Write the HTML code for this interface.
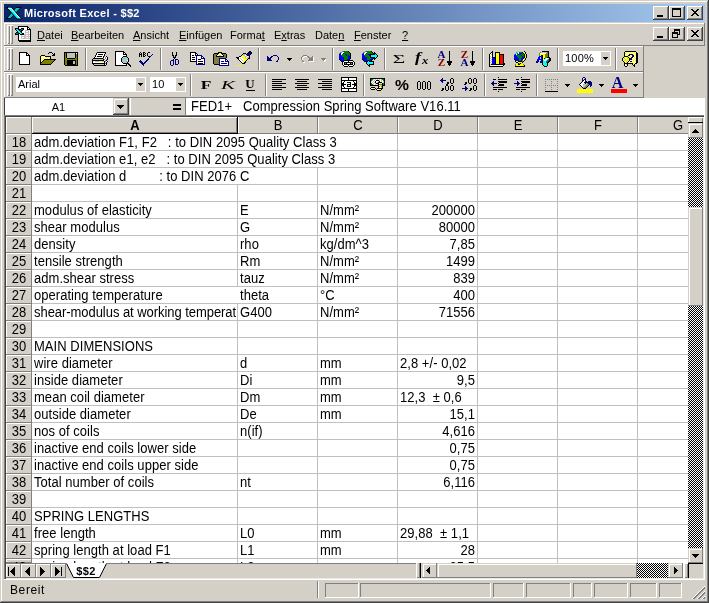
<!DOCTYPE html><html><head><meta charset="utf-8"><title>Microsoft Excel - $$2</title><style>
html,body{margin:0;padding:0;}
body{width:709px;height:603px;background:#d4d0c8;position:relative;overflow:hidden;font-family:"Liberation Sans",sans-serif;font-size:11px;color:#000;}
div,span,svg{position:absolute;box-sizing:border-box;}
svg{shape-rendering:crispEdges;overflow:visible}
.cap{background:#d4d0c8;box-shadow:inset -1px -1px #404040,inset 1px 1px #fff,inset -2px -2px #808080,inset 2px 2px #d4d0c8;}
.sb{background:#d4d0c8;box-shadow:inset -1px -1px #404040,inset 1px 1px #d4d0c8,inset -2px -2px #808080,inset 2px 2px #fff;}
.sb15{background:#d4d0c8;box-shadow:inset -1px -1px #808080,inset 1px 1px #d4d0c8,inset 2px 2px #fff;}
.r1{box-shadow:inset -1px -1px #808080,inset 1px 1px #fff;}
.s1{box-shadow:inset -1px -1px #fff,inset 1px 1px #808080;}
.chk{background:repeating-conic-gradient(#000 0% 25%,#fff 0% 50%) 0 0/2px 2px;}
.m{top:28px;height:14px;line-height:14px;font-size:11px;white-space:pre;}
.m u{text-decoration:underline;text-underline-offset:1px;text-decoration-thickness:1px;}
.c{font-size:13px;line-height:17px;height:17px;white-space:pre;overflow:hidden;letter-spacing:0.04px;}
span.t{display:block;position:static;transform:scaleY(1.075);transform-origin:0 13px;}
.rh{font-size:13px;line-height:17px;height:17px;text-align:center;left:6px;width:26px;background:#d4d0c8;box-shadow:inset -1px -1px #808080,inset 1px 1px #fff;}
.ch{font-size:13px;line-height:17px;height:17px;top:117px;text-align:center;background:#d4d0c8;box-shadow:inset -1px -1px #808080,inset 1px 0 #fff;}
.gh{height:1px;background:#c0c0c0;}
.gv{width:1px;background:#c0c0c0;}
.sep{width:2px;height:20px;box-shadow:inset 1px 0 #808080,inset -1px 0 #fff;}
.grip{width:3px;height:19px;box-shadow:inset 1px 1px #fff,inset -1px -1px #808080;}
</style></head><body><div id="w" style="left:0;top:0;width:709px;height:603px;will-change:transform">
<div style="left:0px;top:1px;width:708px;height:1px;background:#ffffff;"></div>
<div style="left:1px;top:1px;width:1px;height:601px;background:#ffffff;"></div>
<div style="left:707px;top:1px;width:1px;height:601px;background:#808080;"></div>
<div style="left:1px;top:601px;width:707px;height:1px;background:#808080;"></div>
<div style="left:708px;top:0px;width:1px;height:603px;background:#404040;"></div>
<div style="left:0px;top:602px;width:709px;height:1px;background:#404040;"></div>
<div style="left:4px;top:4px;width:701px;height:18px;background:linear-gradient(90deg,#0a246a,#a6caf0);"></div>
<svg style="left:6px;top:6px;shape-rendering:auto" width="16" height="14" viewBox="0 0 16 14"><path d="M10 1.5H15L4.5 12.5H0.5Z" fill="#00c8c8" stroke="#000" stroke-width="1"/><path d="M0.8 1.5H5.5L15.5 13H11Z" fill="#00ffff" stroke="#000" stroke-width="1"/><path d="M2 2.2H5L14 12.4" fill="none" stroke="#fff" stroke-width="1"/></svg>
<div style="left:24px;top:4px;height:18px;line-height:18px;font-weight:bold;color:#fff;font-size:11px;white-space:pre;letter-spacing:0.3px">Microsoft Excel - $$2</div>
<div class="cap" style="left:653px;top:6px;width:16px;height:14px;"></div>
<div class="cap" style="left:669px;top:6px;width:16px;height:14px;"></div>
<div class="cap" style="left:687px;top:6px;width:16px;height:14px;"></div>
<div style="left:657px;top:15px;width:6px;height:2px;background:#000;"></div>
<div style="left:672px;top:8px;width:9px;height:9px;border:1px solid #000;border-top:2px solid #000;"></div>
<svg style="left:691px;top:9px" width="8" height="7" viewBox="0 0 8 7"><path d="M0 0h2v1h1v1h2v-1h1v-1h2v1h-1v1h-1v1h-1v1h1v1h1v1h1v1h-2v-1h-1v-1h-2v1h-1v1h-2v-1h1v-1h1v-1h1v-1h-1v-1h-1v-1h-1z" fill="#000"/></svg>
<div style="left:4px;top:23px;width:700px;height:1px;background:#ffffff;"></div>
<div style="left:4px;top:23px;width:1px;height:22px;background:#ffffff;"></div>
<div style="left:4px;top:45px;width:701px;height:1px;background:#808080;"></div>
<div style="left:704px;top:23px;width:1px;height:23px;background:#808080;"></div>
<div class="grip" style="left:7px;top:25px;width:3px;height:19px;"></div>
<div class="grip" style="left:10px;top:25px;width:3px;height:19px;"></div>
<svg style="left:18px;top:26px" width="13" height="16" viewBox="0 0 13 16"><path fill="#000000" d="M0 0h10v1h-10zM0 1h1v1h-1zM9 1h2v1h-2zM0 2h1v1h-1zM9 2h1v1h-1zM11 2h1v1h-1zM0 3h1v1h-1zM9 3h4v1h-4zM0 4h1v1h-1zM12 4h1v1h-1zM0 5h1v1h-1zM12 5h1v1h-1zM0 6h1v1h-1zM12 6h1v1h-1zM0 7h1v1h-1zM12 7h1v1h-1zM0 8h1v1h-1zM12 8h1v1h-1zM0 9h1v1h-1zM12 9h1v1h-1zM0 10h1v1h-1zM12 10h1v1h-1zM0 11h1v1h-1zM12 11h1v1h-1zM0 12h1v1h-1zM12 12h1v1h-1zM0 13h1v1h-1zM12 13h1v1h-1zM0 14h13v1h-13zM1 15h12v1h-12z"/><path fill="#ffffff" d="M1 1h8v1h-8zM1 2h8v1h-8zM10 2h1v1h-1zM1 3h8v1h-8zM1 4h6v1h-6zM11 4h1v1h-1zM1 5h6v1h-6zM8 5h2v1h-2zM11 5h1v1h-1zM1 6h6v1h-6zM11 6h1v1h-1zM1 7h6v1h-6zM8 7h2v1h-2zM11 7h1v1h-1zM1 8h2v1h-2zM1 9h2v1h-2zM4 9h2v1h-2zM8 9h2v1h-2zM11 9h1v1h-1zM1 10h2v1h-2zM1 11h2v1h-2zM4 11h2v1h-2zM8 11h2v1h-2zM11 11h1v1h-1zM1 12h2v1h-2zM1 13h11v1h-11z"/><path fill="#c0c0c0" d="M7 4h4v1h-4zM7 5h1v1h-1zM10 5h1v1h-1zM7 6h4v1h-4zM7 7h1v1h-1zM10 7h1v1h-1zM3 8h9v1h-9zM3 9h1v1h-1zM6 9h2v1h-2zM10 9h1v1h-1zM3 10h9v1h-9zM3 11h1v1h-1zM6 11h2v1h-2zM10 11h1v1h-1zM3 12h9v1h-9z"/></svg><svg style="left:15px;top:28px" width="9" height="7" viewBox="0 0 9 7"><path fill="#000000" d="M0 0h4v1h-4zM6 0h3v1h-3zM0 1h1v1h-1zM3 1h3v1h-3zM8 1h1v1h-1zM1 2h1v1h-1zM4 2h1v1h-1zM6 2h2v1h-2zM2 3h1v1h-1zM5 3h2v1h-2zM1 4h2v1h-2zM6 4h1v1h-1zM0 5h1v1h-1zM3 5h2v1h-2zM7 5h2v1h-2zM0 6h3v1h-3zM5 6h4v1h-4z"/><path fill="#00ffff" d="M1 1h2v1h-2zM2 2h2v1h-2zM3 3h2v1h-2zM4 4h2v1h-2zM5 5h2v1h-2z"/><path fill="#008080" d="M6 1h2v1h-2zM5 2h1v1h-1zM3 4h1v1h-1zM1 5h2v1h-2z"/></svg>
<div class="m" id="m0" style="left:37px"><u>D</u>atei</div>
<div class="m" id="m1" style="left:71px"><u>B</u>earbeiten</div>
<div class="m" id="m2" style="left:133px"><u>A</u>nsicht</div>
<div class="m" id="m3" style="left:179px"><u>E</u>infügen</div>
<div class="m" id="m4" style="left:230px">Forma<u>t</u></div>
<div class="m" id="m5" style="left:274px">E<u>x</u>tras</div>
<div class="m" id="m6" style="left:315px">Date<u>n</u></div>
<div class="m" id="m7" style="left:354px"><u>F</u>enster</div>
<div class="m" id="m8" style="left:402px"><u>?</u></div>
<div class="cap" style="left:653px;top:27px;width:16px;height:14px;"></div>
<div class="cap" style="left:669px;top:27px;width:16px;height:14px;"></div>
<div class="cap" style="left:687px;top:27px;width:16px;height:14px;"></div>
<div style="left:657px;top:36px;width:6px;height:2px;background:#000;"></div>
<div style="left:674px;top:29px;width:6px;height:6px;border:1px solid #000;border-top:2px solid #000;"></div>
<div style="left:672px;top:32px;width:6px;height:6px;background:#d4d0c8;border:1px solid #000;border-top:2px solid #000;"></div>
<svg style="left:691px;top:30px" width="8" height="7" viewBox="0 0 8 7"><path d="M0 0h2v1h1v1h2v-1h1v-1h2v1h-1v1h-1v1h-1v1h1v1h1v1h1v1h-2v-1h-1v-1h-2v1h-1v1h-2v-1h1v-1h1v-1h1v-1h-1v-1h-1v-1h-1z" fill="#000"/></svg>
<div style="left:4px;top:46px;width:640px;height:1px;background:#ffffff;"></div>
<div style="left:4px;top:46px;width:1px;height:26px;background:#ffffff;"></div>
<div style="left:4px;top:71px;width:640px;height:1px;background:#808080;"></div>
<div style="left:643px;top:46px;width:1px;height:26px;background:#808080;"></div>
<div class="grip" style="left:7px;top:48px;width:3px;height:22px;"></div>
<div class="grip" style="left:10px;top:48px;width:3px;height:22px;"></div>
<div style="left:4px;top:72px;width:640px;height:1px;background:#ffffff;"></div>
<div style="left:4px;top:72px;width:1px;height:26px;background:#ffffff;"></div>
<div style="left:4px;top:97px;width:640px;height:1px;background:#808080;"></div>
<div style="left:643px;top:72px;width:1px;height:26px;background:#808080;"></div>
<div class="grip" style="left:7px;top:74px;width:3px;height:22px;"></div>
<div class="grip" style="left:10px;top:74px;width:3px;height:22px;"></div>
<div class="sep" style="left:85px;top:48px;height:22px"></div>
<div class="sep" style="left:160px;top:48px;height:22px"></div>
<div class="sep" style="left:258px;top:48px;height:22px"></div>
<div class="sep" style="left:332px;top:48px;height:22px"></div>
<div class="sep" style="left:384px;top:48px;height:22px"></div>
<div class="sep" style="left:482px;top:48px;height:22px"></div>
<div class="sep" style="left:557px;top:48px;height:22px"></div>
<div class="sep" style="left:615px;top:48px;height:22px"></div>
<svg style="left:19px;top:52px" width="11" height="13" viewBox="0 0 11 13"><path fill="#000000" d="M0 0h8v1h-8zM0 1h1v1h-1zM7 1h2v1h-2zM0 2h1v1h-1zM7 2h1v1h-1zM9 2h1v1h-1zM0 3h1v1h-1zM7 3h4v1h-4zM0 4h1v1h-1zM10 4h1v1h-1zM0 5h1v1h-1zM10 5h1v1h-1zM0 6h1v1h-1zM10 6h1v1h-1zM0 7h1v1h-1zM10 7h1v1h-1zM0 8h1v1h-1zM10 8h1v1h-1zM0 9h1v1h-1zM10 9h1v1h-1zM0 10h1v1h-1zM10 10h1v1h-1zM0 11h1v1h-1zM10 11h1v1h-1zM0 12h11v1h-11z"/><path fill="#ffffff" d="M1 1h6v1h-6zM1 2h6v1h-6zM8 2h1v1h-1zM1 3h6v1h-6zM1 4h9v1h-9zM1 5h9v1h-9zM1 6h9v1h-9zM1 7h9v1h-9zM1 8h9v1h-9zM1 9h9v1h-9zM1 10h9v1h-9zM1 11h9v1h-9z"/></svg>
<svg style="left:40px;top:52px" width="16" height="13" viewBox="0 0 16 13"><path fill="#000000" d="M9 0h3v1h-3zM8 1h1v1h-1zM12 1h1v1h-1zM14 1h1v1h-1zM13 2h2v1h-2zM1 3h4v1h-4zM12 3h3v1h-3zM0 4h1v1h-1zM5 4h6v1h-6zM0 5h1v1h-1zM10 5h1v1h-1zM0 6h1v1h-1zM10 6h1v1h-1zM0 7h1v1h-1zM4 7h12v1h-12zM0 8h1v1h-1zM3 8h1v1h-1zM14 8h1v1h-1zM0 9h1v1h-1zM2 9h1v1h-1zM13 9h1v1h-1zM0 10h2v1h-2zM12 10h1v1h-1zM0 11h1v1h-1zM11 11h1v1h-1zM0 12h11v1h-11z"/><path fill="#ffff00" d="M1 4h1v1h-1zM3 4h1v1h-1zM2 5h1v1h-1zM4 5h1v1h-1zM6 5h1v1h-1zM8 5h1v1h-1zM1 6h1v1h-1zM3 6h1v1h-1zM5 6h1v1h-1zM7 6h1v1h-1zM9 6h1v1h-1zM2 7h1v1h-1zM1 8h1v1h-1z"/><path fill="#ffffff" d="M2 4h1v1h-1zM4 4h1v1h-1zM1 5h1v1h-1zM3 5h1v1h-1zM5 5h1v1h-1zM7 5h1v1h-1zM9 5h1v1h-1zM2 6h1v1h-1zM4 6h1v1h-1zM6 6h1v1h-1zM8 6h1v1h-1zM1 7h1v1h-1zM3 7h1v1h-1zM2 8h1v1h-1zM1 9h1v1h-1z"/><path fill="#808000" d="M4 8h10v1h-10zM3 9h10v1h-10zM2 10h10v1h-10zM1 11h10v1h-10z"/></svg>
<svg style="left:64px;top:52px" width="14" height="14" viewBox="0 0 14 14"><path fill="#000000" d="M0 0h14v1h-14zM0 1h1v1h-1zM2 1h1v1h-1zM11 1h1v1h-1zM13 1h1v1h-1zM0 2h1v1h-1zM2 2h1v1h-1zM11 2h1v1h-1zM13 2h1v1h-1zM0 3h1v1h-1zM2 3h1v1h-1zM11 3h1v1h-1zM13 3h1v1h-1zM0 4h1v1h-1zM2 4h1v1h-1zM11 4h1v1h-1zM13 4h1v1h-1zM0 5h1v1h-1zM2 5h1v1h-1zM11 5h1v1h-1zM13 5h1v1h-1zM0 6h1v1h-1zM3 6h8v1h-8zM13 6h1v1h-1zM0 7h1v1h-1zM13 7h1v1h-1zM0 8h1v1h-1zM3 8h9v1h-9zM13 8h1v1h-1zM0 9h1v1h-1zM3 9h6v1h-6zM11 9h1v1h-1zM13 9h1v1h-1zM0 10h1v1h-1zM3 10h6v1h-6zM11 10h1v1h-1zM13 10h1v1h-1zM0 11h1v1h-1zM3 11h6v1h-6zM11 11h1v1h-1zM13 11h1v1h-1zM0 12h1v1h-1zM3 12h9v1h-9zM13 12h1v1h-1zM1 13h13v1h-13z"/><path fill="#808000" d="M1 1h1v1h-1zM1 2h1v1h-1zM12 2h1v1h-1zM1 3h1v1h-1zM12 3h1v1h-1zM1 4h1v1h-1zM12 4h1v1h-1zM1 5h1v1h-1zM12 5h1v1h-1zM1 6h2v1h-2zM11 6h2v1h-2zM1 7h12v1h-12zM1 8h2v1h-2zM12 8h1v1h-1zM1 9h2v1h-2zM12 9h1v1h-1zM1 10h2v1h-2zM12 10h1v1h-1zM1 11h2v1h-2zM12 11h1v1h-1zM1 12h2v1h-2zM12 12h1v1h-1z"/><path fill="#c0c0c0" d="M3 1h8v1h-8zM3 2h8v1h-8zM3 3h8v1h-8zM3 4h8v1h-8zM3 5h8v1h-8zM9 9h2v1h-2zM9 10h2v1h-2zM9 11h2v1h-2z"/><path fill="#ffffff" d="M12 1h1v1h-1z"/></svg>
<svg style="left:92px;top:52px" width="16" height="14" viewBox="0 0 16 14"><path fill="#000000" d="M5 0h9v1h-9zM4 1h1v1h-1zM13 1h1v1h-1zM4 2h1v1h-1zM6 2h5v1h-5zM12 2h1v1h-1zM3 3h1v1h-1zM12 3h1v1h-1zM3 4h1v1h-1zM5 4h5v1h-5zM11 4h1v1h-1zM14 4h1v1h-1zM2 5h1v1h-1zM11 5h1v1h-1zM15 5h1v1h-1zM1 6h10v1h-10zM15 6h1v1h-1zM0 7h1v1h-1zM11 7h1v1h-1zM15 7h1v1h-1zM0 8h12v1h-12zM14 8h1v1h-1zM0 9h1v1h-1zM12 9h1v1h-1zM15 9h1v1h-1zM0 10h1v1h-1zM12 10h1v1h-1zM14 10h1v1h-1zM0 11h13v1h-13zM14 11h1v1h-1zM1 12h1v1h-1zM12 12h1v1h-1zM14 12h1v1h-1zM2 13h12v1h-12z"/><path fill="#ffffff" d="M5 1h8v1h-8zM5 2h1v1h-1zM11 2h1v1h-1zM4 3h8v1h-8zM4 4h1v1h-1zM10 4h1v1h-1zM13 4h1v1h-1zM3 5h8v1h-8zM12 5h1v1h-1zM14 5h1v1h-1zM12 6h1v1h-1zM14 6h1v1h-1zM13 7h1v1h-1zM12 8h1v1h-1zM1 9h2v1h-2zM14 9h1v1h-1zM1 10h11v1h-11zM13 10h1v1h-1zM13 12h1v1h-1z"/><path fill="#808080" d="M12 4h1v1h-1zM13 5h1v1h-1zM11 6h1v1h-1zM13 6h1v1h-1zM12 7h1v1h-1zM14 7h1v1h-1zM13 8h1v1h-1zM13 9h1v1h-1zM13 11h1v1h-1z"/><path fill="#c0c0c0" d="M1 7h10v1h-10zM3 9h4v1h-4zM10 9h2v1h-2zM2 12h10v1h-10z"/><path fill="#ffff00" d="M7 9h3v1h-3z"/></svg>
<svg style="left:115px;top:51px" width="16" height="16" viewBox="0 0 16 16"><path fill="#000000" d="M0 0h9v1h-9zM0 1h1v1h-1zM8 1h2v1h-2zM0 2h1v1h-1zM8 2h1v1h-1zM10 2h1v1h-1zM0 3h1v1h-1zM8 3h4v1h-4zM0 4h1v1h-1zM11 4h1v1h-1zM0 5h1v1h-1zM8 5h4v1h-4zM0 6h1v1h-1zM7 6h1v1h-1zM12 6h1v1h-1zM0 7h1v1h-1zM6 7h1v1h-1zM13 7h1v1h-1zM0 8h1v1h-1zM6 8h1v1h-1zM13 8h1v1h-1zM0 9h1v1h-1zM6 9h1v1h-1zM13 9h1v1h-1zM0 10h1v1h-1zM6 10h1v1h-1zM13 10h1v1h-1zM0 11h1v1h-1zM7 11h1v1h-1zM12 11h1v1h-1zM0 12h1v1h-1zM8 12h6v1h-6zM0 13h1v1h-1zM11 13h1v1h-1zM13 13h2v1h-2zM0 14h12v1h-12zM14 14h2v1h-2zM15 15h1v1h-1z"/><path fill="#ffffff" d="M1 1h7v1h-7zM1 2h7v1h-7zM9 2h1v1h-1zM1 3h7v1h-7zM1 4h10v1h-10zM1 5h7v1h-7zM1 6h6v1h-6zM1 7h5v1h-5zM1 8h5v1h-5zM1 9h5v1h-5zM12 9h1v1h-1zM1 10h5v1h-5zM1 11h6v1h-6zM1 12h7v1h-7zM1 13h10v1h-10z"/><path fill="#c0c0c0" d="M8 6h4v1h-4zM7 7h1v1h-1zM10 7h3v1h-3zM7 8h1v1h-1zM9 8h4v1h-4zM7 9h5v1h-5zM7 10h4v1h-4zM12 10h1v1h-1zM8 11h4v1h-4z"/><path fill="#00ffff" d="M8 7h2v1h-2zM8 8h1v1h-1zM11 10h1v1h-1z"/></svg>
<svg style="left:138px;top:52px" width="16" height="14" viewBox="0 0 16 14"><path fill="#000000" d="M2 0h1v1h-1zM5 0h2v1h-2zM10 0h2v1h-2zM1 1h1v1h-1zM3 1h1v1h-1zM5 1h1v1h-1zM7 1h1v1h-1zM9 1h1v1h-1zM1 2h3v1h-3zM5 2h2v1h-2zM9 2h1v1h-1zM1 3h1v1h-1zM3 3h1v1h-1zM5 3h1v1h-1zM7 3h1v1h-1zM9 3h1v1h-1zM1 4h1v1h-1zM3 4h1v1h-1zM5 4h2v1h-2zM10 4h2v1h-2z"/><path fill="#000080" d="M14 2h1v1h-1zM13 3h1v1h-1zM12 4h1v1h-1zM11 5h1v1h-1zM10 6h1v1h-1zM9 7h2v1h-2zM2 8h1v1h-1zM8 8h2v1h-2zM1 9h3v1h-3zM7 9h2v1h-2zM2 10h3v1h-3zM6 10h2v1h-2zM3 11h4v1h-4zM4 12h2v1h-2zM5 13h1v1h-1z"/></svg>
<svg style="left:170px;top:52px" width="10" height="14" viewBox="0 0 10 14"><path fill="#000000" d="M2 0h1v1h-1zM6 0h1v1h-1zM2 1h1v1h-1zM6 1h1v1h-1zM2 2h1v1h-1zM6 2h1v1h-1zM2 3h2v1h-2zM5 3h2v1h-2zM3 4h1v1h-1zM5 4h1v1h-1zM3 5h3v1h-3zM4 6h1v1h-1z"/><path fill="#000080" d="M3 7h1v1h-1zM5 7h3v1h-3zM1 8h3v1h-3zM5 8h1v1h-1zM8 8h1v1h-1zM0 9h1v1h-1zM3 9h1v1h-1zM5 9h1v1h-1zM8 9h1v1h-1zM0 10h1v1h-1zM3 10h1v1h-1zM5 10h1v1h-1zM8 10h1v1h-1zM0 11h1v1h-1zM3 11h1v1h-1zM5 11h1v1h-1zM8 11h1v1h-1zM0 12h1v1h-1zM3 12h1v1h-1zM5 12h3v1h-3zM1 13h2v1h-2z"/></svg>
<svg style="left:190px;top:52px" width="15" height="13" viewBox="0 0 15 13"><path fill="#000000" d="M0 0h6v1h-6zM0 1h1v1h-1zM5 1h2v1h-2zM0 2h1v1h-1zM5 2h1v1h-1zM7 2h1v1h-1zM0 3h1v1h-1zM2 3h2v1h-2zM5 3h1v1h-1zM0 4h1v1h-1zM0 5h1v1h-1zM2 5h3v1h-3zM0 6h1v1h-1zM0 7h1v1h-1zM2 7h3v1h-3zM8 7h3v1h-3zM0 8h1v1h-1zM0 9h6v1h-6zM8 9h5v1h-5zM8 11h5v1h-5z"/><path fill="#ffffff" d="M1 1h4v1h-4zM1 2h4v1h-4zM6 2h1v1h-1zM1 3h1v1h-1zM4 3h1v1h-1zM1 4h5v1h-5zM7 4h4v1h-4zM1 5h1v1h-1zM5 5h1v1h-1zM7 5h4v1h-4zM12 5h1v1h-1zM1 6h5v1h-5zM7 6h4v1h-4zM1 7h1v1h-1zM5 7h1v1h-1zM7 7h1v1h-1zM11 7h3v1h-3zM1 8h5v1h-5zM7 8h7v1h-7zM7 9h1v1h-1zM13 9h1v1h-1zM7 10h7v1h-7zM7 11h1v1h-1zM13 11h1v1h-1z"/><path fill="#000080" d="M6 3h6v1h-6zM6 4h1v1h-1zM11 4h2v1h-2zM6 5h1v1h-1zM11 5h1v1h-1zM13 5h1v1h-1zM6 6h1v1h-1zM11 6h4v1h-4zM6 7h1v1h-1zM14 7h1v1h-1zM6 8h1v1h-1zM14 8h1v1h-1zM6 9h1v1h-1zM14 9h1v1h-1zM6 10h1v1h-1zM14 10h1v1h-1zM6 11h1v1h-1zM14 11h1v1h-1zM6 12h9v1h-9z"/></svg>
<svg style="left:213px;top:52px" width="16" height="14" viewBox="0 0 16 14"><path fill="#000000" d="M5 0h4v1h-4zM1 1h5v1h-5zM8 1h5v1h-5zM0 2h1v1h-1zM4 2h1v1h-1zM9 2h1v1h-1zM13 2h1v1h-1zM0 3h1v1h-1zM3 3h1v1h-1zM10 3h1v1h-1zM13 3h1v1h-1zM0 4h1v1h-1zM3 4h8v1h-8zM13 4h1v1h-1zM0 5h1v1h-1zM13 5h1v1h-1zM0 6h1v1h-1zM0 7h1v1h-1zM0 8h1v1h-1zM0 9h1v1h-1zM0 10h1v1h-1zM0 11h1v1h-1zM1 12h5v1h-5z"/><path fill="#ffff00" d="M6 1h2v1h-2zM5 2h1v1h-1zM8 2h1v1h-1z"/><path fill="#808000" d="M1 2h1v1h-1zM3 2h1v1h-1zM11 2h1v1h-1zM2 3h1v1h-1zM11 3h1v1h-1zM1 4h1v1h-1zM12 4h1v1h-1zM2 5h1v1h-1zM4 5h1v1h-1zM6 5h1v1h-1zM8 5h1v1h-1zM10 5h1v1h-1zM12 5h1v1h-1zM1 6h1v1h-1zM3 6h1v1h-1zM5 6h1v1h-1zM2 7h1v1h-1zM4 7h1v1h-1zM1 8h1v1h-1zM3 8h1v1h-1zM5 8h1v1h-1zM2 9h1v1h-1zM4 9h1v1h-1zM1 10h1v1h-1zM3 10h1v1h-1zM5 10h1v1h-1zM2 11h1v1h-1zM4 11h1v1h-1z"/><path fill="#808080" d="M2 2h1v1h-1zM10 2h1v1h-1zM12 2h1v1h-1zM1 3h1v1h-1zM12 3h1v1h-1zM2 4h1v1h-1zM11 4h1v1h-1zM1 5h1v1h-1zM3 5h1v1h-1zM5 5h1v1h-1zM7 5h1v1h-1zM9 5h1v1h-1zM11 5h1v1h-1zM2 6h1v1h-1zM4 6h1v1h-1zM1 7h1v1h-1zM3 7h1v1h-1zM5 7h1v1h-1zM2 8h1v1h-1zM4 8h1v1h-1zM1 9h1v1h-1zM3 9h1v1h-1zM5 9h1v1h-1zM2 10h1v1h-1zM4 10h1v1h-1zM1 11h1v1h-1zM3 11h1v1h-1zM5 11h1v1h-1z"/><path fill="#ffffff" d="M6 2h2v1h-2zM4 3h2v1h-2zM8 3h2v1h-2zM7 7h5v1h-5zM7 8h5v1h-5zM13 8h1v1h-1zM7 9h1v1h-1zM11 9h1v1h-1zM7 10h8v1h-8zM7 11h1v1h-1zM14 11h1v1h-1zM7 12h8v1h-8z"/><path fill="#c0c0c0" d="M6 3h2v1h-2z"/><path fill="#000080" d="M6 6h7v1h-7zM6 7h1v1h-1zM12 7h2v1h-2zM6 8h1v1h-1zM12 8h1v1h-1zM14 8h1v1h-1zM6 9h1v1h-1zM8 9h3v1h-3zM12 9h4v1h-4zM6 10h1v1h-1zM15 10h1v1h-1zM6 11h1v1h-1zM8 11h6v1h-6zM15 11h1v1h-1zM6 12h1v1h-1zM15 12h1v1h-1zM6 13h10v1h-10z"/></svg>
<svg style="left:236px;top:51px" width="18" height="15" viewBox="0 0 18 15"><path fill="#000000" d="M13 0h2v1h-2zM12 1h1v1h-1zM15 1h1v1h-1zM7 2h3v1h-3zM11 2h1v1h-1zM15 2h1v1h-1zM6 3h1v1h-1zM10 3h1v1h-1zM14 3h1v1h-1zM5 4h1v1h-1zM13 4h1v1h-1zM3 5h2v1h-2zM13 5h1v1h-1zM0 6h3v1h-3zM13 6h1v1h-1zM1 7h2v1h-2zM12 7h2v1h-2zM2 8h1v1h-1zM11 8h1v1h-1zM3 9h1v1h-1zM10 9h1v1h-1zM4 10h1v1h-1zM9 10h1v1h-1zM5 11h1v1h-1zM8 11h2v1h-2zM6 12h3v1h-3z"/><path fill="#000080" d="M13 1h2v1h-2zM12 2h3v1h-3zM11 3h3v1h-3zM11 4h2v1h-2z"/><path fill="#c0c0c0" d="M7 3h3v1h-3zM7 4h2v1h-2zM10 4h1v1h-1zM9 5h2v1h-2zM12 5h1v1h-1zM9 6h1v1h-1zM11 6h2v1h-2zM4 7h1v1h-1zM10 7h2v1h-2zM5 8h1v1h-1zM6 9h1v1h-1z"/><path fill="#ffff00" d="M6 4h1v1h-1zM5 5h1v1h-1zM7 5h2v1h-2zM6 6h3v1h-3zM7 7h3v1h-3zM8 8h3v1h-3zM8 9h2v1h-2zM7 10h2v1h-2zM7 11h1v1h-1zM5 13h1v1h-1zM0 14h1v1h-1zM2 14h1v1h-1zM4 14h1v1h-1z"/><path fill="#ffffff" d="M9 4h1v1h-1zM6 5h1v1h-1zM11 5h1v1h-1zM3 6h3v1h-3zM10 6h1v1h-1zM3 7h1v1h-1zM5 7h2v1h-2zM3 8h2v1h-2zM6 8h2v1h-2zM4 9h2v1h-2zM7 9h1v1h-1zM5 10h2v1h-2zM6 11h1v1h-1z"/></svg>
<svg style="left:267px;top:55px" width="12" height="7" viewBox="0 0 12 7"><path fill="#000080" d="M6 0h4v1h-4zM0 1h1v1h-1zM4 1h2v1h-2zM10 1h1v1h-1zM0 2h2v1h-2zM3 2h2v1h-2zM11 2h1v1h-1zM0 3h4v1h-4zM11 3h1v1h-1zM0 4h4v1h-4zM11 4h1v1h-1zM0 5h5v1h-5zM10 5h1v1h-1zM9 6h2v1h-2z"/></svg>
<svg style="left:287px;top:58px" width="5" height="3" viewBox="0 0 5 3"><path fill="#000000" d="M0 0h5v1h-5zM1 1h3v1h-3zM2 2h1v1h-1z"/></svg>
<svg style="left:301px;top:55px" width="13" height="8" viewBox="0 0 13 8"><path fill="#808080" d="M2 0h4v1h-4zM1 1h1v1h-1zM6 1h2v1h-2zM11 1h1v1h-1zM0 2h1v1h-1zM7 2h2v1h-2zM10 2h2v1h-2zM0 3h1v1h-1zM8 3h4v1h-4zM0 4h1v1h-1zM8 4h4v1h-4zM1 5h1v1h-1zM7 5h5v1h-5zM1 6h2v1h-2z"/><path fill="#ffffff" d="M3 1h3v1h-3zM2 2h1v1h-1zM12 2h1v1h-1zM1 3h1v1h-1zM12 3h1v1h-1zM1 4h1v1h-1zM12 4h1v1h-1zM12 5h1v1h-1zM8 6h5v1h-5zM2 7h2v1h-2z"/></svg>
<svg style="left:321px;top:58px" width="6" height="4" viewBox="0 0 6 4"><path fill="#808080" d="M0 0h5v1h-5zM1 1h3v1h-3zM2 2h1v1h-1z"/><path fill="#ffffff" d="M4 1h1v1h-1zM3 2h2v1h-2zM3 3h1v1h-1z"/></svg>
<svg style="left:339px;top:51px" width="12" height="11" viewBox="0 0 12 11"><path fill="#808080" d="M3 0h1v1h-1zM1 1h2v1h-2zM0 2h1v1h-1z"/><path fill="#008080" d="M4 0h1v1h-1z"/><path fill="#008000" d="M5 0h4v1h-4zM5 1h5v1h-5zM5 2h6v1h-6zM3 3h3v1h-3zM8 3h3v1h-3zM2 4h5v1h-5zM8 4h1v1h-1zM10 4h1v1h-1zM3 5h6v1h-6zM5 6h4v1h-4zM5 7h4v1h-4zM5 8h3v1h-3zM6 9h1v1h-1z"/><path fill="#000000" d="M9 0h1v1h-1zM10 1h1v1h-1zM11 2h1v1h-1zM11 3h1v1h-1zM11 4h1v1h-1zM11 5h1v1h-1zM11 6h1v1h-1zM11 7h1v1h-1zM0 8h1v1h-1zM10 8h1v1h-1zM1 9h1v1h-1zM9 9h1v1h-1zM2 10h7v1h-7z"/><path fill="#ffffff" d="M3 1h2v1h-2zM2 2h2v1h-2zM2 3h1v1h-1z"/><path fill="#0000ff" d="M1 2h1v1h-1zM4 2h1v1h-1zM0 3h2v1h-2zM6 3h2v1h-2zM0 4h2v1h-2zM9 4h1v1h-1zM0 5h3v1h-3zM9 5h2v1h-2zM0 6h5v1h-5zM9 6h2v1h-2zM0 7h5v1h-5zM9 7h2v1h-2zM1 8h4v1h-4zM8 8h2v1h-2zM2 9h4v1h-4zM7 9h2v1h-2z"/><path fill="#000080" d="M7 4h1v1h-1z"/></svg>
<svg style="left:342px;top:60px" width="13" height="7" viewBox="0 0 13 7"><path fill="#000000" d="M2 0h4v1h-4zM7 0h4v1h-4zM1 1h1v1h-1zM6 1h1v1h-1zM11 1h1v1h-1zM0 2h1v1h-1zM2 2h9v1h-9zM12 2h1v1h-1zM0 3h1v1h-1zM2 3h1v1h-1zM4 3h1v1h-1zM8 3h1v1h-1zM10 3h1v1h-1zM12 3h1v1h-1zM0 4h1v1h-1zM2 4h9v1h-9zM12 4h1v1h-1zM1 5h1v1h-1zM6 5h1v1h-1zM11 5h1v1h-1zM2 6h4v1h-4zM7 6h4v1h-4z"/><path fill="#ffffff" d="M2 1h4v1h-4zM7 1h4v1h-4zM1 2h1v1h-1zM11 2h1v1h-1zM1 3h1v1h-1zM5 3h3v1h-3zM11 3h1v1h-1zM1 4h1v1h-1zM11 4h1v1h-1zM2 5h4v1h-4zM7 5h4v1h-4z"/><path fill="#808080" d="M3 3h1v1h-1zM9 3h1v1h-1z"/></svg>
<svg style="left:362px;top:51px" width="12" height="11" viewBox="0 0 12 11"><path fill="#808080" d="M3 0h1v1h-1zM1 1h2v1h-2zM0 2h1v1h-1z"/><path fill="#008080" d="M4 0h1v1h-1z"/><path fill="#008000" d="M5 0h4v1h-4zM5 1h5v1h-5zM5 2h6v1h-6zM3 3h3v1h-3zM8 3h3v1h-3zM2 4h5v1h-5zM8 4h1v1h-1zM10 4h1v1h-1zM3 5h6v1h-6zM5 6h4v1h-4zM5 7h4v1h-4zM5 8h3v1h-3zM6 9h1v1h-1z"/><path fill="#000000" d="M9 0h1v1h-1zM10 1h1v1h-1zM11 2h1v1h-1zM11 3h1v1h-1zM11 4h1v1h-1zM11 5h1v1h-1zM11 6h1v1h-1zM11 7h1v1h-1zM0 8h1v1h-1zM10 8h1v1h-1zM1 9h1v1h-1zM9 9h1v1h-1zM2 10h7v1h-7z"/><path fill="#ffffff" d="M3 1h2v1h-2zM2 2h2v1h-2zM2 3h1v1h-1z"/><path fill="#0000ff" d="M1 2h1v1h-1zM4 2h1v1h-1zM0 3h2v1h-2zM6 3h2v1h-2zM0 4h2v1h-2zM9 4h1v1h-1zM0 5h3v1h-3zM9 5h2v1h-2zM0 6h5v1h-5zM9 6h2v1h-2zM0 7h5v1h-5zM9 7h2v1h-2zM1 8h4v1h-4zM8 8h2v1h-2zM2 9h4v1h-4zM7 9h2v1h-2z"/><path fill="#000080" d="M7 4h1v1h-1z"/></svg>
<svg style="left:370px;top:52px" width="8" height="8" viewBox="0 0 8 8"><path fill="#000000" d="M4 0h1v1h-1zM4 1h2v1h-2zM0 2h5v1h-5zM6 2h1v1h-1zM0 3h1v1h-1zM7 3h1v1h-1zM0 4h1v1h-1zM7 4h1v1h-1zM0 5h5v1h-5zM6 5h1v1h-1zM4 6h2v1h-2zM4 7h1v1h-1z"/><path fill="#00ffff" d="M5 2h1v1h-1zM1 3h6v1h-6zM1 4h6v1h-6zM5 5h1v1h-1z"/></svg>
<svg style="left:366px;top:60px" width="8" height="7" viewBox="0 0 8 7"><path fill="#000000" d="M2 0h1v1h-1zM1 1h1v1h-1zM3 1h5v1h-5zM0 2h1v1h-1zM7 2h1v1h-1zM0 3h1v1h-1zM7 3h1v1h-1zM1 4h1v1h-1zM3 4h5v1h-5zM2 5h2v1h-2zM3 6h1v1h-1z"/><path fill="#00ffff" d="M2 1h1v1h-1zM1 2h6v1h-6zM1 3h6v1h-6zM2 4h1v1h-1z"/></svg>
<div style="left:392px;top:48.6px;width:14px;height:20px;line-height:20px;font-family:'Liberation Serif',serif;font-size:13px;text-align:center;transform:scaleX(1.65)">Σ</div>
<div style="left:415px;top:47px;width:12px;height:20px;line-height:20px;font-family:'Liberation Serif',serif;font-size:14.5px;font-weight:bold;font-style:italic;transform:scaleX(1.25);transform-origin:0 0">f</div>
<div style="left:422px;top:53px;width:8px;height:16px;line-height:16px;font-family:'Liberation Serif',serif;font-size:10px;font-weight:bold;font-style:italic;transform:scaleX(1.25);transform-origin:0 0">x</div>
<div style="left:437px;top:49px;width:9px;height:10px;line-height:10px;font-family:'Liberation Serif',serif;font-size:11px;font-weight:bold;color:#000080;text-align:center">A</div><div style="left:437px;top:57px;width:9px;height:10px;line-height:10px;font-family:'Liberation Serif',serif;font-size:11px;font-weight:bold;color:#800000;text-align:center">Z</div><svg style="left:447px;top:51px" width="5" height="15" viewBox="0 0 5 15"><path fill="#000000" d="M2 0h1v1h-1zM2 1h1v1h-1zM2 2h1v1h-1zM2 3h1v1h-1zM2 4h1v1h-1zM2 5h1v1h-1zM2 6h1v1h-1zM2 7h1v1h-1zM2 8h1v1h-1zM2 9h1v1h-1zM0 10h5v1h-5zM0 11h5v1h-5zM1 12h3v1h-3zM1 13h3v1h-3zM2 14h1v1h-1z"/></svg>
<div style="left:460px;top:49px;width:9px;height:10px;line-height:10px;font-family:'Liberation Serif',serif;font-size:11px;font-weight:bold;color:#800000;text-align:center">Z</div><div style="left:460px;top:57px;width:9px;height:10px;line-height:10px;font-family:'Liberation Serif',serif;font-size:11px;font-weight:bold;color:#000080;text-align:center">A</div><svg style="left:470px;top:51px" width="5" height="15" viewBox="0 0 5 15"><path fill="#000000" d="M2 0h1v1h-1zM2 1h1v1h-1zM2 2h1v1h-1zM2 3h1v1h-1zM2 4h1v1h-1zM2 5h1v1h-1zM2 6h1v1h-1zM2 7h1v1h-1zM2 8h1v1h-1zM2 9h1v1h-1zM0 10h5v1h-5zM0 11h5v1h-5zM1 12h3v1h-3zM1 13h3v1h-3zM2 14h1v1h-1z"/></svg>
<svg style="left:489px;top:51px" width="16" height="16" viewBox="0 0 16 16"><path fill="#000000" d="M3 0h1v1h-1zM2 1h2v1h-2zM6 1h5v1h-5zM1 2h1v1h-1zM3 2h1v1h-1zM6 2h1v1h-1zM10 2h1v1h-1zM0 3h1v1h-1zM3 3h1v1h-1zM6 3h1v1h-1zM10 3h5v1h-5zM0 4h1v1h-1zM3 4h1v1h-1zM6 4h1v1h-1zM10 4h1v1h-1zM14 4h1v1h-1zM0 5h1v1h-1zM3 5h1v1h-1zM6 5h1v1h-1zM10 5h1v1h-1zM14 5h1v1h-1zM0 6h1v1h-1zM3 6h4v1h-4zM10 6h1v1h-1zM14 6h1v1h-1zM0 7h1v1h-1zM6 7h1v1h-1zM10 7h1v1h-1zM14 7h1v1h-1zM0 8h1v1h-1zM6 8h1v1h-1zM10 8h1v1h-1zM14 8h1v1h-1zM0 9h1v1h-1zM6 9h1v1h-1zM10 9h1v1h-1zM14 9h1v1h-1zM0 10h1v1h-1zM6 10h1v1h-1zM10 10h1v1h-1zM14 10h1v1h-1zM0 11h1v1h-1zM6 11h1v1h-1zM10 11h1v1h-1zM14 11h1v1h-1zM0 12h1v1h-1zM6 12h1v1h-1zM10 12h1v1h-1zM14 12h2v1h-2zM0 13h1v1h-1zM2 13h14v1h-14zM0 14h1v1h-1zM14 14h1v1h-1zM0 15h14v1h-14z"/><path fill="#ffffff" d="M2 2h1v1h-1zM1 3h1v1h-1zM1 4h2v1h-2zM2 5h1v1h-1zM1 6h1v1h-1zM2 7h1v1h-1zM1 8h1v1h-1zM2 9h1v1h-1zM1 10h1v1h-1zM2 11h1v1h-1zM1 12h1v1h-1zM1 14h13v1h-13z"/><path fill="#ffff00" d="M7 2h3v1h-3zM7 3h3v1h-3zM7 4h3v1h-3zM7 5h3v1h-3zM7 6h3v1h-3zM7 7h3v1h-3zM7 8h3v1h-3zM7 9h3v1h-3zM7 10h3v1h-3zM7 11h3v1h-3zM7 12h3v1h-3z"/><path fill="#c0c0c0" d="M2 3h1v1h-1zM1 5h1v1h-1zM2 6h1v1h-1zM1 7h1v1h-1zM2 8h1v1h-1zM1 9h1v1h-1zM2 10h1v1h-1zM1 11h1v1h-1zM2 12h1v1h-1zM1 13h1v1h-1z"/><path fill="#ff0000" d="M11 4h3v1h-3zM11 5h3v1h-3zM11 6h3v1h-3zM11 7h3v1h-3zM11 8h3v1h-3zM11 9h3v1h-3zM11 10h3v1h-3zM11 11h3v1h-3zM11 12h3v1h-3z"/><path fill="#0000ff" d="M3 7h3v1h-3zM3 8h3v1h-3zM3 9h3v1h-3zM3 10h3v1h-3zM3 11h3v1h-3zM3 12h3v1h-3z"/></svg>
<svg style="left:514px;top:51px" width="14" height="16" viewBox="0 0 14 16"><path fill="#c0c0c0" d="M3 0h5v1h-5z"/><path fill="#000000" d="M10 0h1v1h-1zM8 1h1v1h-1zM11 1h1v1h-1zM9 2h1v1h-1zM11 2h1v1h-1zM10 3h1v1h-1zM12 3h1v1h-1zM10 4h1v1h-1zM12 4h1v1h-1zM10 5h1v1h-1zM12 5h1v1h-1zM10 6h1v1h-1zM12 6h1v1h-1zM11 7h1v1h-1zM0 8h1v1h-1zM11 8h1v1h-1zM1 9h1v1h-1zM10 9h1v1h-1zM1 10h1v1h-1zM4 10h4v1h-4zM9 10h1v1h-1zM2 11h2v1h-2zM8 11h1v1h-1zM4 12h1v1h-1zM6 12h1v1h-1zM4 13h2v1h-2zM10 14h1v1h-1zM1 15h10v1h-10z"/><path fill="#808080" d="M2 1h1v1h-1zM0 3h1v1h-1z"/><path fill="#00ffff" d="M3 1h1v1h-1zM1 2h2v1h-2z"/><path fill="#ffffff" d="M4 1h1v1h-1zM4 2h1v1h-1zM2 3h1v1h-1z"/><path fill="#008000" d="M5 1h3v1h-3zM3 2h1v1h-1zM8 2h1v1h-1zM3 3h1v1h-1zM7 3h3v1h-3zM2 4h5v1h-5zM8 4h2v1h-2zM3 5h5v1h-5zM9 5h1v1h-1zM4 6h4v1h-4zM5 7h2v1h-2zM5 8h2v1h-2zM5 9h2v1h-2z"/><path fill="#ffff00" d="M10 1h1v1h-1zM10 2h1v1h-1zM11 3h1v1h-1zM11 4h1v1h-1zM11 5h1v1h-1zM11 6h1v1h-1zM10 7h1v1h-1zM9 8h2v1h-2zM9 9h1v1h-1zM2 10h2v1h-2zM4 11h4v1h-4zM2 13h2v1h-2zM6 13h3v1h-3zM2 14h8v1h-8z"/><path fill="#0000ff" d="M5 2h3v1h-3zM1 3h1v1h-1zM4 3h3v1h-3zM0 4h2v1h-2zM7 4h1v1h-1zM0 5h3v1h-3zM8 5h1v1h-1zM0 6h4v1h-4zM8 6h2v1h-2zM0 7h5v1h-5zM7 7h3v1h-3zM1 8h4v1h-4zM7 8h2v1h-2zM2 9h3v1h-3zM7 9h1v1h-1z"/><path fill="#808000" d="M8 9h1v1h-1zM8 10h1v1h-1zM5 12h1v1h-1zM1 13h1v1h-1zM9 13h1v1h-1zM1 14h1v1h-1z"/></svg>
<svg style="left:535px;top:51px" width="16" height="16" viewBox="0 0 16 16"><path fill="#000000" d="M7 0h7v1h-7zM13 1h1v1h-1zM13 2h1v1h-1zM13 3h1v1h-1zM7 4h1v1h-1zM13 4h1v1h-1zM7 5h1v1h-1zM13 5h1v1h-1zM7 6h1v1h-1zM12 6h3v1h-3zM7 7h1v1h-1zM9 7h1v1h-1zM14 7h2v1h-2zM7 8h1v1h-1zM14 8h2v1h-2zM7 9h1v1h-1zM14 9h2v1h-2zM7 10h1v1h-1zM13 10h2v1h-2zM7 11h1v1h-1zM12 11h2v1h-2zM7 12h1v1h-1zM12 12h1v1h-1zM7 13h1v1h-1zM12 13h1v1h-1zM8 14h1v1h-1zM12 14h1v1h-1zM9 15h3v1h-3z"/><path fill="#808000" d="M5 1h1v1h-1zM12 1h1v1h-1zM4 2h1v1h-1zM11 2h2v1h-2zM4 3h1v1h-1zM10 3h3v1h-3zM4 4h1v1h-1zM10 4h3v1h-3zM10 5h3v1h-3zM10 6h1v1h-1z"/><path fill="#c0c0c0" d="M6 1h6v1h-6zM13 7h1v1h-1zM12 8h1v1h-1zM11 9h1v1h-1zM10 10h1v1h-1z"/><path fill="#ffffff" d="M5 2h6v1h-6zM11 7h2v1h-2zM8 8h1v1h-1zM10 8h2v1h-2zM9 9h2v1h-2z"/><path fill="#ffff00" d="M5 3h5v1h-5zM5 4h1v1h-1zM8 4h2v1h-2zM8 5h2v1h-2zM8 6h2v1h-2zM8 7h1v1h-1z"/><path fill="#0000ff" d="M6 4h1v1h-1zM4 5h3v1h-3zM3 6h2v1h-2zM6 6h1v1h-1zM3 7h2v1h-2zM6 7h1v1h-1zM2 8h5v1h-5zM2 9h2v1h-2zM6 9h1v1h-1z"/><path fill="#008080" d="M11 6h1v1h-1zM13 8h1v1h-1zM12 9h2v1h-2zM11 10h2v1h-2zM11 11h1v1h-1z"/><path fill="#00ffff" d="M10 7h1v1h-1zM9 8h1v1h-1zM8 9h1v1h-1zM8 10h2v1h-2zM8 11h3v1h-3zM8 12h4v1h-4zM8 13h4v1h-4zM9 14h3v1h-3z"/><path fill="#000080" d="M1 10h3v1h-3zM5 10h2v1h-2zM1 11h2v1h-2zM5 11h2v1h-2z"/></svg>
<div style="left:563px;top:51px;width:48px;height:15px;background:#fff"></div>
<div style="left:601px;top:52px;width:9px;height:13px;background:#d4d0c8"></div>
<svg style="left:603px;top:57px" width="5" height="3" viewBox="0 0 5 3"><path fill="#000000" d="M0 0h5v1h-5zM1 1h3v1h-3zM2 2h1v1h-1z"/></svg>
<div style="left:565px;top:51px;height:15px;line-height:15px;font-size:11px;letter-spacing:0.2px">100%</div>
<svg style="left:622px;top:51px" width="16" height="16" viewBox="0 0 16 16"><path fill="#000000" d="M3 0h11v1h-11zM2 1h1v1h-1zM14 1h1v1h-1zM2 2h1v1h-1zM14 2h2v1h-2zM2 3h1v1h-1zM14 3h2v1h-2zM2 4h1v1h-1zM14 4h2v1h-2zM2 5h4v1h-4zM14 5h2v1h-2zM1 6h1v1h-1zM6 6h1v1h-1zM14 6h2v1h-2zM0 7h1v1h-1zM7 7h1v1h-1zM14 7h2v1h-2zM0 8h1v1h-1zM7 8h1v1h-1zM14 8h2v1h-2zM0 9h1v1h-1zM7 9h1v1h-1zM14 9h2v1h-2zM1 10h1v1h-1zM6 10h1v1h-1zM14 10h2v1h-2zM2 11h1v1h-1zM5 11h1v1h-1zM14 11h2v1h-2zM2 12h9v1h-9zM13 12h2v1h-2zM2 13h1v1h-1zM5 13h1v1h-1zM10 13h1v1h-1zM12 13h1v1h-1zM2 14h1v1h-1zM5 14h1v1h-1zM11 14h2v1h-2zM3 15h2v1h-2zM12 15h1v1h-1z"/><path fill="#ffffff" d="M3 1h1v1h-1zM5 1h1v1h-1zM7 1h1v1h-1zM9 1h1v1h-1zM11 1h1v1h-1zM13 1h1v1h-1zM4 2h1v1h-1zM6 2h1v1h-1zM8 2h1v1h-1zM10 2h1v1h-1zM12 2h1v1h-1zM3 3h1v1h-1zM5 3h1v1h-1zM12 3h1v1h-1zM4 4h1v1h-1zM8 4h1v1h-1zM12 4h1v1h-1zM7 5h1v1h-1zM9 5h1v1h-1zM13 5h1v1h-1zM8 6h1v1h-1zM11 6h1v1h-1zM13 6h1v1h-1zM10 7h1v1h-1zM12 7h1v1h-1zM11 8h1v1h-1zM13 8h1v1h-1zM8 9h1v1h-1zM10 9h1v1h-1zM12 9h1v1h-1zM7 10h1v1h-1zM10 10h1v1h-1zM12 10h1v1h-1zM7 11h1v1h-1zM9 11h1v1h-1zM11 11h1v1h-1zM13 11h1v1h-1zM12 12h1v1h-1zM3 13h1v1h-1zM3 14h2v1h-2z"/><path fill="#ffff00" d="M4 1h1v1h-1zM6 1h1v1h-1zM8 1h1v1h-1zM10 1h1v1h-1zM12 1h1v1h-1zM3 2h1v1h-1zM5 2h1v1h-1zM7 2h1v1h-1zM9 2h1v1h-1zM11 2h1v1h-1zM13 2h1v1h-1zM4 3h1v1h-1zM6 3h1v1h-1zM11 3h1v1h-1zM13 3h1v1h-1zM3 4h1v1h-1zM5 4h1v1h-1zM9 4h1v1h-1zM13 4h1v1h-1zM6 5h1v1h-1zM8 5h1v1h-1zM12 5h1v1h-1zM2 6h4v1h-4zM7 6h1v1h-1zM12 6h1v1h-1zM1 7h1v1h-1zM3 7h2v1h-2zM6 7h1v1h-1zM11 7h1v1h-1zM13 7h1v1h-1zM1 8h2v1h-2zM4 8h3v1h-3zM10 8h1v1h-1zM12 8h1v1h-1zM1 9h1v1h-1zM3 9h2v1h-2zM6 9h1v1h-1zM9 9h1v1h-1zM11 9h1v1h-1zM13 9h1v1h-1zM2 10h2v1h-2zM5 10h1v1h-1zM11 10h1v1h-1zM13 10h1v1h-1zM3 11h2v1h-2zM6 11h1v1h-1zM8 11h1v1h-1zM10 11h1v1h-1zM12 11h1v1h-1zM11 12h1v1h-1zM11 13h1v1h-1z"/><path fill="#000080" d="M7 3h4v1h-4zM6 4h2v1h-2zM10 4h2v1h-2zM10 5h2v1h-2zM9 6h2v1h-2zM8 7h2v1h-2zM8 8h2v1h-2zM8 10h2v1h-2z"/><path fill="#c0c0c0" d="M2 7h1v1h-1zM5 7h1v1h-1zM3 8h1v1h-1zM2 9h1v1h-1zM5 9h1v1h-1zM4 10h1v1h-1zM4 13h1v1h-1z"/></svg>
<div class="sep" style="left:190px;top:74px;height:22px"></div>
<div class="sep" style="left:265px;top:74px;height:22px"></div>
<div class="sep" style="left:363px;top:74px;height:22px"></div>
<div class="sep" style="left:484px;top:74px;height:22px"></div>
<div class="sep" style="left:536px;top:74px;height:22px"></div>
<div style="left:16px;top:77px;width:130px;height:15px;background:#fff"></div>
<div style="left:136px;top:78px;width:9px;height:13px;background:#d4d0c8"></div>
<svg style="left:138px;top:83px" width="5" height="3" viewBox="0 0 5 3"><path fill="#000000" d="M0 0h5v1h-5zM1 1h3v1h-3zM2 2h1v1h-1z"/></svg>
<div style="left:18px;top:77px;height:15px;line-height:15px;font-size:11px;letter-spacing:0px">Arial</div>
<div style="left:150px;top:77px;width:36px;height:15px;background:#fff"></div>
<div style="left:176px;top:78px;width:9px;height:13px;background:#d4d0c8"></div>
<svg style="left:178px;top:83px" width="5" height="3" viewBox="0 0 5 3"><path fill="#000000" d="M0 0h5v1h-5zM1 1h3v1h-3zM2 2h1v1h-1z"/></svg>
<div style="left:152px;top:77px;height:15px;line-height:15px;font-size:11px;letter-spacing:0.2px">10</div>
<div style="font-family:'Liberation Serif',serif;font-weight:bold;font-size:13px;height:20px;line-height:20px;text-align:center;width:16px;left:198px;top:74.5px;font-size:13.5px;transform:scaleX(1.3)">F</div>
<div style="font-family:'Liberation Serif',serif;font-weight:bold;font-size:13px;height:20px;line-height:20px;text-align:center;width:16px;left:220px;top:74.5px;font-style:italic;font-weight:normal;font-size:13.5px;transform:scaleX(1.55)">K</div>
<div style="font-family:'Liberation Serif',serif;font-weight:bold;font-size:13px;height:20px;line-height:20px;text-align:center;width:16px;left:242px;top:73.5px;">U</div>
<div style="left:246px;top:90px;width:9px;height:1px;background:#000"></div>
<div style="left:272px;top:79px;width:14px;height:1px;background:#000"></div><div style="left:272px;top:81px;width:10px;height:1px;background:#000"></div><div style="left:272px;top:83px;width:14px;height:1px;background:#000"></div><div style="left:272px;top:85px;width:10px;height:1px;background:#000"></div><div style="left:272px;top:87px;width:14px;height:1px;background:#000"></div><div style="left:272px;top:89px;width:10px;height:1px;background:#000"></div>
<div style="left:295px;top:79px;width:14px;height:1px;background:#000"></div><div style="left:297px;top:81px;width:10px;height:1px;background:#000"></div><div style="left:295px;top:83px;width:14px;height:1px;background:#000"></div><div style="left:297px;top:85px;width:10px;height:1px;background:#000"></div><div style="left:295px;top:87px;width:14px;height:1px;background:#000"></div><div style="left:297px;top:89px;width:10px;height:1px;background:#000"></div>
<div style="left:318px;top:79px;width:14px;height:1px;background:#000"></div><div style="left:322px;top:81px;width:10px;height:1px;background:#000"></div><div style="left:318px;top:83px;width:14px;height:1px;background:#000"></div><div style="left:322px;top:85px;width:10px;height:1px;background:#000"></div><div style="left:318px;top:87px;width:14px;height:1px;background:#000"></div><div style="left:322px;top:89px;width:10px;height:1px;background:#000"></div>
<svg style="left:341px;top:77px" width="16" height="15" viewBox="0 0 16 15"><path fill="#000000" d="M0 0h16v1h-16zM0 1h1v1h-1zM7 1h1v1h-1zM15 1h1v1h-1zM0 2h1v1h-1zM7 2h1v1h-1zM15 2h1v1h-1zM0 3h16v1h-16zM0 4h1v1h-1zM3 4h1v1h-1zM12 4h1v1h-1zM15 4h1v1h-1zM0 5h1v1h-1zM2 5h1v1h-1zM6 5h4v1h-4zM13 5h1v1h-1zM15 5h1v1h-1zM0 6h3v1h-3zM9 6h1v1h-1zM13 6h3v1h-3zM0 7h5v1h-5zM6 7h4v1h-4zM11 7h5v1h-5zM0 8h3v1h-3zM6 8h1v1h-1zM9 8h1v1h-1zM13 8h3v1h-3zM0 9h1v1h-1zM2 9h1v1h-1zM6 9h4v1h-4zM13 9h1v1h-1zM15 9h1v1h-1zM0 10h1v1h-1zM3 10h1v1h-1zM12 10h1v1h-1zM15 10h1v1h-1zM0 11h16v1h-16zM0 12h1v1h-1zM7 12h1v1h-1zM15 12h1v1h-1zM0 13h1v1h-1zM7 13h1v1h-1zM15 13h1v1h-1zM0 14h16v1h-16z"/><path fill="#ffffff" d="M1 1h6v1h-6zM8 1h7v1h-7zM1 2h6v1h-6zM8 2h7v1h-7zM1 4h2v1h-2zM4 4h8v1h-8zM13 4h2v1h-2zM1 5h1v1h-1zM3 5h3v1h-3zM10 5h3v1h-3zM14 5h1v1h-1zM3 6h6v1h-6zM10 6h3v1h-3zM5 7h1v1h-1zM10 7h1v1h-1zM3 8h3v1h-3zM7 8h2v1h-2zM10 8h3v1h-3zM1 9h1v1h-1zM3 9h3v1h-3zM10 9h3v1h-3zM14 9h1v1h-1zM1 10h2v1h-2zM4 10h8v1h-8zM13 10h2v1h-2zM1 12h6v1h-6zM8 12h7v1h-7zM1 13h6v1h-6zM8 13h7v1h-7z"/></svg>
<svg style="left:370px;top:78px" width="15" height="13" viewBox="0 0 15 13"><path fill="#000000" d="M0 0h15v1h-15zM0 1h1v1h-1zM14 1h1v1h-1zM0 2h1v1h-1zM6 2h3v1h-3zM14 2h1v1h-1zM0 3h1v1h-1zM5 3h1v1h-1zM9 3h1v1h-1zM14 3h1v1h-1zM0 4h1v1h-1zM5 4h1v1h-1zM8 4h4v1h-4zM14 4h1v1h-1zM0 5h1v1h-1zM6 5h3v1h-3zM12 5h1v1h-1zM14 5h1v1h-1zM0 6h1v1h-1zM8 6h1v1h-1zM12 6h1v1h-1zM14 6h1v1h-1zM0 7h9v1h-9zM12 7h3v1h-3zM8 8h1v1h-1zM12 8h1v1h-1zM1 9h4v1h-4zM8 9h1v1h-1zM12 9h1v1h-1zM0 10h1v1h-1zM5 10h1v1h-1zM7 10h6v1h-6zM1 11h4v1h-4zM6 11h1v1h-1zM11 11h1v1h-1zM7 12h4v1h-4z"/><path fill="#008000" d="M1 1h2v1h-2zM12 1h2v1h-2zM1 2h1v1h-1zM13 2h1v1h-1zM1 5h1v1h-1zM13 5h1v1h-1zM1 6h2v1h-2zM13 6h1v1h-1z"/><path fill="#c0c0c0" d="M3 1h1v1h-1zM5 1h1v1h-1zM7 1h1v1h-1zM9 1h1v1h-1zM11 1h1v1h-1zM2 2h1v1h-1zM4 2h1v1h-1zM9 2h1v1h-1zM11 2h1v1h-1zM1 3h1v1h-1zM3 3h1v1h-1zM8 3h1v1h-1zM11 3h1v1h-1zM13 3h1v1h-1zM2 4h1v1h-1zM4 4h1v1h-1zM7 4h1v1h-1zM13 4h1v1h-1zM3 5h1v1h-1zM5 5h1v1h-1zM3 6h1v1h-1zM5 6h1v1h-1zM7 6h1v1h-1zM10 7h2v1h-2zM11 9h1v1h-1z"/><path fill="#ffffff" d="M4 1h1v1h-1zM6 1h1v1h-1zM8 1h1v1h-1zM10 1h1v1h-1zM3 2h1v1h-1zM5 2h1v1h-1zM10 2h1v1h-1zM12 2h1v1h-1zM2 3h1v1h-1zM4 3h1v1h-1zM6 3h2v1h-2zM10 3h1v1h-1zM12 3h1v1h-1zM1 4h1v1h-1zM3 4h1v1h-1zM6 4h1v1h-1zM12 4h1v1h-1zM2 5h1v1h-1zM4 5h1v1h-1zM9 5h1v1h-1zM4 6h1v1h-1zM6 6h1v1h-1zM9 7h1v1h-1zM9 9h2v1h-2zM1 10h2v1h-2zM7 11h2v1h-2z"/><path fill="#ffff00" d="M10 5h2v1h-2zM10 8h1v1h-1zM3 10h2v1h-2zM9 11h2v1h-2z"/><path fill="#808000" d="M9 6h3v1h-3zM9 8h1v1h-1zM11 8h1v1h-1z"/></svg>
<div style="left:393px;top:76px;width:18px;height:18px;line-height:18px;font-size:14px;font-weight:bold;text-align:center;transform:scaleX(1.12)">%</div>
<svg style="left:417px;top:81px" width="4" height="9" viewBox="0 0 4 9"><path fill="#000000" d="M1 0h2v1h-2zM0 1h1v1h-1zM3 1h1v1h-1zM0 2h1v1h-1zM3 2h1v1h-1zM0 3h1v1h-1zM3 3h1v1h-1zM0 4h1v1h-1zM3 4h1v1h-1zM0 5h1v1h-1zM3 5h1v1h-1zM0 6h1v1h-1zM3 6h1v1h-1zM0 7h1v1h-1zM3 7h1v1h-1zM1 8h2v1h-2z"/></svg>
<svg style="left:422px;top:81px" width="4" height="9" viewBox="0 0 4 9"><path fill="#000000" d="M1 0h2v1h-2zM0 1h1v1h-1zM3 1h1v1h-1zM0 2h1v1h-1zM3 2h1v1h-1zM0 3h1v1h-1zM3 3h1v1h-1zM0 4h1v1h-1zM3 4h1v1h-1zM0 5h1v1h-1zM3 5h1v1h-1zM0 6h1v1h-1zM3 6h1v1h-1zM0 7h1v1h-1zM3 7h1v1h-1zM1 8h2v1h-2z"/></svg>
<svg style="left:427px;top:81px" width="4" height="9" viewBox="0 0 4 9"><path fill="#000000" d="M1 0h2v1h-2zM0 1h1v1h-1zM3 1h1v1h-1zM0 2h1v1h-1zM3 2h1v1h-1zM0 3h1v1h-1zM3 3h1v1h-1zM0 4h1v1h-1zM3 4h1v1h-1zM0 5h1v1h-1zM3 5h1v1h-1zM0 6h1v1h-1zM3 6h1v1h-1zM0 7h1v1h-1zM3 7h1v1h-1zM1 8h2v1h-2z"/></svg>
<svg style="left:440px;top:78px" width="6" height="5" viewBox="0 0 6 5"><path fill="#000080" d="M2 0h1v1h-1zM1 1h2v1h-2zM0 2h6v1h-6zM1 3h2v1h-2zM2 4h1v1h-1z"/></svg>
<svg style="left:446px;top:82px" width="3" height="3" viewBox="0 0 3 3"><path fill="#000000" d="M1 0h2v1h-2zM1 1h2v1h-2zM0 2h2v1h-2z"/></svg>
<svg style="left:450px;top:78px" width="4" height="6" viewBox="0 0 4 6"><path fill="#000000" d="M1 0h2v1h-2zM0 1h1v1h-1zM3 1h1v1h-1zM0 2h1v1h-1zM3 2h1v1h-1zM0 3h1v1h-1zM3 3h1v1h-1zM0 4h1v1h-1zM3 4h1v1h-1zM1 5h2v1h-2z"/></svg>
<svg style="left:441px;top:88px" width="3" height="3" viewBox="0 0 3 3"><path fill="#000000" d="M1 0h2v1h-2zM1 1h2v1h-2zM0 2h2v1h-2z"/></svg>
<svg style="left:445px;top:85px" width="4" height="6" viewBox="0 0 4 6"><path fill="#000000" d="M1 0h2v1h-2zM0 1h1v1h-1zM3 1h1v1h-1zM0 2h1v1h-1zM3 2h1v1h-1zM0 3h1v1h-1zM3 3h1v1h-1zM0 4h1v1h-1zM3 4h1v1h-1zM1 5h2v1h-2z"/></svg>
<svg style="left:450px;top:85px" width="4" height="6" viewBox="0 0 4 6"><path fill="#000000" d="M1 0h2v1h-2zM0 1h1v1h-1zM3 1h1v1h-1zM0 2h1v1h-1zM3 2h1v1h-1zM0 3h1v1h-1zM3 3h1v1h-1zM0 4h1v1h-1zM3 4h1v1h-1zM1 5h2v1h-2z"/></svg>
<svg style="left:464px;top:82px" width="3" height="3" viewBox="0 0 3 3"><path fill="#000000" d="M1 0h2v1h-2zM1 1h2v1h-2zM0 2h2v1h-2z"/></svg>
<svg style="left:468px;top:78px" width="4" height="6" viewBox="0 0 4 6"><path fill="#000000" d="M1 0h2v1h-2zM0 1h1v1h-1zM3 1h1v1h-1zM0 2h1v1h-1zM3 2h1v1h-1zM0 3h1v1h-1zM3 3h1v1h-1zM0 4h1v1h-1zM3 4h1v1h-1zM1 5h2v1h-2z"/></svg>
<svg style="left:473px;top:78px" width="4" height="6" viewBox="0 0 4 6"><path fill="#000000" d="M1 0h2v1h-2zM0 1h1v1h-1zM3 1h1v1h-1zM0 2h1v1h-1zM3 2h1v1h-1zM0 3h1v1h-1zM3 3h1v1h-1zM0 4h1v1h-1zM3 4h1v1h-1zM1 5h2v1h-2z"/></svg>
<svg style="left:462px;top:86px" width="6" height="5" viewBox="0 0 6 5"><path fill="#000080" d="M3 0h1v1h-1zM3 1h2v1h-2zM0 2h6v1h-6zM3 3h2v1h-2zM3 4h1v1h-1z"/></svg>
<svg style="left:469px;top:88px" width="3" height="3" viewBox="0 0 3 3"><path fill="#000000" d="M1 0h2v1h-2zM1 1h2v1h-2zM0 2h2v1h-2z"/></svg>
<svg style="left:473px;top:85px" width="4" height="6" viewBox="0 0 4 6"><path fill="#000000" d="M1 0h2v1h-2zM0 1h1v1h-1zM3 1h1v1h-1zM0 2h1v1h-1zM3 2h1v1h-1zM0 3h1v1h-1zM3 3h1v1h-1zM0 4h1v1h-1zM3 4h1v1h-1zM1 5h2v1h-2z"/></svg>
<svg style="left:491px;top:77px" width="16" height="15" viewBox="0 0 16 15"><path fill="#000000" d="M7 0h1v1h-1zM2 2h3v1h-3zM7 2h9v1h-9zM7 4h9v1h-9zM8 5h8v1h-8zM7 6h1v1h-1zM8 7h5v1h-5zM7 8h6v1h-6zM2 10h14v1h-14zM2 12h4v1h-4zM7 12h5v1h-5zM7 14h1v1h-1z"/></svg><svg style="left:491px;top:81px" width="6" height="5" viewBox="0 0 6 5"><path fill="#000080" d="M2 0h1v1h-1zM1 1h2v1h-2zM0 2h6v1h-6zM1 3h2v1h-2zM2 4h1v1h-1z"/></svg>
<svg style="left:514px;top:77px" width="16" height="15" viewBox="0 0 16 15"><path fill="#000000" d="M7 0h1v1h-1zM2 2h3v1h-3zM7 2h9v1h-9zM7 4h9v1h-9zM8 5h8v1h-8zM7 6h1v1h-1zM8 7h5v1h-5zM7 8h6v1h-6zM2 10h14v1h-14zM2 12h4v1h-4zM7 12h5v1h-5zM7 14h1v1h-1z"/></svg><svg style="left:514px;top:81px" width="6" height="5" viewBox="0 0 6 5"><path fill="#000080" d="M3 0h1v1h-1zM3 1h2v1h-2zM0 2h6v1h-6zM3 3h2v1h-2zM3 4h1v1h-1z"/></svg>
<svg style="left:545px;top:79px" width="13" height="13" viewBox="0 0 13 13"><path fill="#808080" d="M0 0h1v1h-1zM2 0h1v1h-1zM4 0h1v1h-1zM6 0h1v1h-1zM8 0h1v1h-1zM10 0h1v1h-1zM12 0h1v1h-1zM0 2h1v1h-1zM6 2h1v1h-1zM12 2h1v1h-1zM0 4h1v1h-1zM6 4h1v1h-1zM12 4h1v1h-1zM0 6h1v1h-1zM2 6h1v1h-1zM4 6h1v1h-1zM6 6h1v1h-1zM8 6h1v1h-1zM10 6h1v1h-1zM12 6h1v1h-1zM0 8h1v1h-1zM6 8h1v1h-1zM12 8h1v1h-1zM0 10h1v1h-1zM6 10h1v1h-1zM12 10h1v1h-1z"/><path fill="#000000" d="M0 12h13v1h-13z"/></svg>
<svg style="left:565px;top:84px" width="5" height="3" viewBox="0 0 5 3"><path fill="#000000" d="M0 0h5v1h-5zM1 1h3v1h-3zM2 2h1v1h-1z"/></svg>
<svg style="left:579px;top:77px" width="13" height="12" viewBox="0 0 13 12"><path fill="#000080" d="M4 0h2v1h-2zM3 1h1v1h-1zM6 1h1v1h-1zM3 2h1v1h-1zM6 2h1v1h-1zM3 3h1v1h-1zM6 3h1v1h-1zM6 4h1v1h-1zM9 4h3v1h-3zM9 5h4v1h-4zM10 6h3v1h-3zM11 7h2v1h-2zM11 8h2v1h-2zM11 9h1v1h-1z"/><path fill="#000000" d="M5 2h1v1h-1zM4 3h1v1h-1zM3 4h1v1h-1zM7 4h1v1h-1zM2 5h1v1h-1zM5 5h4v1h-4zM1 6h1v1h-1zM6 6h1v1h-1zM9 6h1v1h-1zM0 7h1v1h-1zM10 7h1v1h-1zM1 8h1v1h-1zM9 8h1v1h-1zM2 9h1v1h-1zM8 9h1v1h-1zM3 10h1v1h-1zM7 10h1v1h-1zM4 11h3v1h-3z"/><path fill="#ffffff" d="M5 3h1v1h-1zM4 4h2v1h-2zM3 5h2v1h-2zM2 6h3v1h-3zM1 7h3v1h-3zM2 8h2v1h-2zM3 9h1v1h-1z"/><path fill="#c0c0c0" d="M5 6h1v1h-1zM7 6h1v1h-1zM4 7h4v1h-4zM4 8h3v1h-3zM4 9h2v1h-2zM4 10h1v1h-1z"/><path fill="#808080" d="M8 6h1v1h-1zM8 7h2v1h-2zM7 8h2v1h-2zM6 9h2v1h-2zM5 10h2v1h-2z"/></svg>
<div style="left:577px;top:89px;width:16px;height:4px;background:#ffff00"></div>
<svg style="left:599px;top:84px" width="5" height="3" viewBox="0 0 5 3"><path fill="#000000" d="M0 0h5v1h-5zM1 1h3v1h-3zM2 2h1v1h-1z"/></svg>
<div style="left:609px;top:74px;width:17px;height:18px;line-height:18px;font-family:'Liberation Serif',serif;font-weight:bold;font-size:16px;color:#000080;text-align:center">A</div>
<div style="left:611px;top:89px;width:16px;height:4px;background:#ff0000"></div>
<svg style="left:633px;top:84px" width="5" height="3" viewBox="0 0 5 3"><path fill="#000000" d="M0 0h5v1h-5zM1 1h3v1h-3zM2 2h1v1h-1z"/></svg>
<div style="left:5px;top:98px;width:124px;height:17px;background:#ffffff;"></div>
<div style="left:4px;top:98px;width:1px;height:17px;background:#404040;"></div>
<div style="left:6px;top:99px;width:105px;height:16px;line-height:16px;font-size:11px;text-align:center">A1</div>
<div class="sb" style="left:113px;top:98px;width:16px;height:17px;"></div>
<svg style="left:117px;top:105px" width="7" height="4" viewBox="0 0 7 4"><path d="M0 0h7v1h-1v1h-1v1h-1v1h-1v-1h-1v-1h-1v-1h-1z" fill="#000"/></svg>
<div style="left:130px;top:98px;width:1px;height:17px;background:#ffffff;"></div>
<div style="left:173px;top:104px;width:8px;height:2px;background:#000;"></div>
<div style="left:173px;top:108px;width:8px;height:2px;background:#000;"></div>
<div style="left:185px;top:98px;width:1px;height:17px;background:#808080;"></div>
<div style="left:186px;top:98px;width:519px;height:17px;background:#ffffff;"></div>
<div class="c" style="left:191px;top:98px;font-size:13px;"><span class="t">FED1+   Compression Spring Software V16.11</span></div>
<div style="left:4px;top:115px;width:700px;height:1px;background:#808080;"></div>
<div style="left:5px;top:116px;width:699px;height:1px;background:#404040;"></div>
<div style="left:4px;top:115px;width:1px;height:464px;background:#808080;"></div>
<div style="left:5px;top:116px;width:1px;height:463px;background:#404040;"></div>
<div style="left:704px;top:115px;width:1px;height:465px;background:#ffffff;"></div>
<div style="left:4px;top:579px;width:701px;height:1px;background:#ffffff;"></div>
<div style="left:6px;top:117px;width:682px;height:446px;background:#ffffff;"></div>
<div class="r1" style="left:6px;top:117px;width:26px;height:17px;background:#d4d0c8;"></div>
<div class="ch" style="left:32px;width:206px;font-weight:bold;box-shadow:inset -1px -1px #000,inset 1px 1px #fff,inset -2px -2px #808080;"><span class="t">A</span></div>
<div class="ch" style="left:238px;width:80px"><span class="t">B</span></div>
<div class="ch" style="left:318px;width:80px"><span class="t">C</span></div>
<div class="ch" style="left:398px;width:80px"><span class="t">D</span></div>
<div class="ch" style="left:478px;width:80px"><span class="t">E</span></div>
<div class="ch" style="left:558px;width:80px"><span class="t">F</span></div>
<div class="ch" style="left:638px;width:50px;box-shadow:inset 0 -1px #808080,inset 1px 0 #fff;"><span class="t" style="width:80px;text-align:center">G</span></div>
<div style="left:32px;top:150px;width:656px;height:1px;background:#c0c0c0;"></div>
<div style="left:32px;top:167px;width:656px;height:1px;background:#c0c0c0;"></div>
<div style="left:32px;top:184px;width:656px;height:1px;background:#c0c0c0;"></div>
<div style="left:32px;top:201px;width:656px;height:1px;background:#c0c0c0;"></div>
<div style="left:32px;top:218px;width:656px;height:1px;background:#c0c0c0;"></div>
<div style="left:32px;top:235px;width:656px;height:1px;background:#c0c0c0;"></div>
<div style="left:32px;top:252px;width:656px;height:1px;background:#c0c0c0;"></div>
<div style="left:32px;top:269px;width:656px;height:1px;background:#c0c0c0;"></div>
<div style="left:32px;top:286px;width:656px;height:1px;background:#c0c0c0;"></div>
<div style="left:32px;top:303px;width:656px;height:1px;background:#c0c0c0;"></div>
<div style="left:32px;top:320px;width:656px;height:1px;background:#c0c0c0;"></div>
<div style="left:32px;top:337px;width:656px;height:1px;background:#c0c0c0;"></div>
<div style="left:32px;top:354px;width:656px;height:1px;background:#c0c0c0;"></div>
<div style="left:32px;top:371px;width:656px;height:1px;background:#c0c0c0;"></div>
<div style="left:32px;top:388px;width:656px;height:1px;background:#c0c0c0;"></div>
<div style="left:32px;top:405px;width:656px;height:1px;background:#c0c0c0;"></div>
<div style="left:32px;top:422px;width:656px;height:1px;background:#c0c0c0;"></div>
<div style="left:32px;top:439px;width:656px;height:1px;background:#c0c0c0;"></div>
<div style="left:32px;top:456px;width:656px;height:1px;background:#c0c0c0;"></div>
<div style="left:32px;top:473px;width:656px;height:1px;background:#c0c0c0;"></div>
<div style="left:32px;top:490px;width:656px;height:1px;background:#c0c0c0;"></div>
<div style="left:32px;top:507px;width:656px;height:1px;background:#c0c0c0;"></div>
<div style="left:32px;top:524px;width:656px;height:1px;background:#c0c0c0;"></div>
<div style="left:32px;top:541px;width:656px;height:1px;background:#c0c0c0;"></div>
<div style="left:32px;top:558px;width:656px;height:1px;background:#c0c0c0;"></div>
<div style="left:237px;top:185px;width:1px;height:101px;background:#c0c0c0;"></div>
<div style="left:237px;top:303px;width:1px;height:260px;background:#c0c0c0;"></div>
<div style="left:317px;top:168px;width:1px;height:395px;background:#c0c0c0;"></div>
<div style="left:397px;top:134px;width:1px;height:429px;background:#c0c0c0;"></div>
<div style="left:477px;top:134px;width:1px;height:429px;background:#c0c0c0;"></div>
<div style="left:557px;top:134px;width:1px;height:429px;background:#c0c0c0;"></div>
<div style="left:637px;top:134px;width:1px;height:429px;background:#c0c0c0;"></div>
<div class="rh" style="top:134px;height:17px;overflow:hidden"><span class="t">18</span></div>
<div class="c" style="left:34px;top:134px;width:500px;height:17px"><span class="t">adm.deviation F1, F2   : to DIN 2095 Quality Class 3</span></div>
<div class="rh" style="top:151px;height:17px;overflow:hidden"><span class="t">19</span></div>
<div class="c" style="left:34px;top:151px;width:500px;height:17px"><span class="t">adm.deviation e1, e2   : to DIN 2095 Quality Class 3</span></div>
<div class="rh" style="top:168px;height:17px;overflow:hidden"><span class="t">20</span></div>
<div class="c" style="left:34px;top:168px;width:500px;height:17px"><span class="t">adm.deviation d         : to DIN 2076 C</span></div>
<div class="rh" style="top:185px;height:17px;overflow:hidden"><span class="t">21</span></div>
<div class="rh" style="top:202px;height:17px;overflow:hidden"><span class="t">22</span></div>
<div class="c" style="left:34px;top:202px;width:203px;height:17px"><span class="t">modulus of elasticity</span></div>
<div class="c" style="left:240px;top:202px;width:77px;height:17px"><span class="t">E</span></div>
<div class="c" style="left:320px;top:202px;width:77px;height:17px"><span class="t">N/mm²</span></div>
<div class="c" style="left:398px;top:202px;width:77px;height:17px;text-align:right"><span class="t">200000</span></div>
<div class="rh" style="top:219px;height:17px;overflow:hidden"><span class="t">23</span></div>
<div class="c" style="left:34px;top:219px;width:203px;height:17px"><span class="t">shear modulus</span></div>
<div class="c" style="left:240px;top:219px;width:77px;height:17px"><span class="t">G</span></div>
<div class="c" style="left:320px;top:219px;width:77px;height:17px"><span class="t">N/mm²</span></div>
<div class="c" style="left:398px;top:219px;width:77px;height:17px;text-align:right"><span class="t">80000</span></div>
<div class="rh" style="top:236px;height:17px;overflow:hidden"><span class="t">24</span></div>
<div class="c" style="left:34px;top:236px;width:203px;height:17px"><span class="t">density</span></div>
<div class="c" style="left:240px;top:236px;width:77px;height:17px"><span class="t">rho</span></div>
<div class="c" style="left:320px;top:236px;width:77px;height:17px"><span class="t">kg/dm^3</span></div>
<div class="c" style="left:398px;top:236px;width:77px;height:17px;text-align:right"><span class="t">7,85</span></div>
<div class="rh" style="top:253px;height:17px;overflow:hidden"><span class="t">25</span></div>
<div class="c" style="left:34px;top:253px;width:203px;height:17px"><span class="t">tensile strength</span></div>
<div class="c" style="left:240px;top:253px;width:77px;height:17px"><span class="t">Rm</span></div>
<div class="c" style="left:320px;top:253px;width:77px;height:17px"><span class="t">N/mm²</span></div>
<div class="c" style="left:398px;top:253px;width:77px;height:17px;text-align:right"><span class="t">1499</span></div>
<div class="rh" style="top:270px;height:17px;overflow:hidden"><span class="t">26</span></div>
<div class="c" style="left:34px;top:270px;width:203px;height:17px"><span class="t">adm.shear stress</span></div>
<div class="c" style="left:240px;top:270px;width:77px;height:17px"><span class="t">tauz</span></div>
<div class="c" style="left:320px;top:270px;width:77px;height:17px"><span class="t">N/mm²</span></div>
<div class="c" style="left:398px;top:270px;width:77px;height:17px;text-align:right"><span class="t">839</span></div>
<div class="rh" style="top:287px;height:17px;overflow:hidden"><span class="t">27</span></div>
<div class="c" style="left:34px;top:287px;width:203px;height:17px"><span class="t">operating temperature</span></div>
<div class="c" style="left:240px;top:287px;width:77px;height:17px"><span class="t">theta</span></div>
<div class="c" style="left:320px;top:287px;width:77px;height:17px"><span class="t">°C</span></div>
<div class="c" style="left:398px;top:287px;width:77px;height:17px;text-align:right"><span class="t">400</span></div>
<div class="rh" style="top:304px;height:17px;overflow:hidden"><span class="t">28</span></div>
<div class="c" style="left:34px;top:304px;width:203px;height:17px;letter-spacing:-0.05px"><span class="t">shear-modulus at working temperat</span></div>
<div class="c" style="left:240px;top:304px;width:77px;height:17px"><span class="t">G400</span></div>
<div class="c" style="left:320px;top:304px;width:77px;height:17px"><span class="t">N/mm²</span></div>
<div class="c" style="left:398px;top:304px;width:77px;height:17px;text-align:right"><span class="t">71556</span></div>
<div class="rh" style="top:321px;height:17px;overflow:hidden"><span class="t">29</span></div>
<div class="rh" style="top:338px;height:17px;overflow:hidden"><span class="t">30</span></div>
<div class="c" style="left:34px;top:338px;width:500px;height:17px"><span class="t">MAIN DIMENSIONS</span></div>
<div class="rh" style="top:355px;height:17px;overflow:hidden"><span class="t">31</span></div>
<div class="c" style="left:34px;top:355px;width:203px;height:17px"><span class="t">wire diameter</span></div>
<div class="c" style="left:240px;top:355px;width:77px;height:17px"><span class="t">d</span></div>
<div class="c" style="left:320px;top:355px;width:77px;height:17px"><span class="t">mm</span></div>
<div class="c" style="left:400px;top:355px;width:77px;height:17px"><span class="t">2,8 +/- 0,02</span></div>
<div class="rh" style="top:372px;height:17px;overflow:hidden"><span class="t">32</span></div>
<div class="c" style="left:34px;top:372px;width:203px;height:17px"><span class="t">inside diameter</span></div>
<div class="c" style="left:240px;top:372px;width:77px;height:17px"><span class="t">Di</span></div>
<div class="c" style="left:320px;top:372px;width:77px;height:17px"><span class="t">mm</span></div>
<div class="c" style="left:398px;top:372px;width:77px;height:17px;text-align:right"><span class="t">9,5</span></div>
<div class="rh" style="top:389px;height:17px;overflow:hidden"><span class="t">33</span></div>
<div class="c" style="left:34px;top:389px;width:203px;height:17px"><span class="t">mean coil diameter</span></div>
<div class="c" style="left:240px;top:389px;width:77px;height:17px"><span class="t">Dm</span></div>
<div class="c" style="left:320px;top:389px;width:77px;height:17px"><span class="t">mm</span></div>
<div class="c" style="left:400px;top:389px;width:77px;height:17px"><span class="t">12,3  ± 0,6</span></div>
<div class="rh" style="top:406px;height:17px;overflow:hidden"><span class="t">34</span></div>
<div class="c" style="left:34px;top:406px;width:203px;height:17px"><span class="t">outside diameter</span></div>
<div class="c" style="left:240px;top:406px;width:77px;height:17px"><span class="t">De</span></div>
<div class="c" style="left:320px;top:406px;width:77px;height:17px"><span class="t">mm</span></div>
<div class="c" style="left:398px;top:406px;width:77px;height:17px;text-align:right"><span class="t">15,1</span></div>
<div class="rh" style="top:423px;height:17px;overflow:hidden"><span class="t">35</span></div>
<div class="c" style="left:34px;top:423px;width:203px;height:17px"><span class="t">nos of coils</span></div>
<div class="c" style="left:240px;top:423px;width:77px;height:17px"><span class="t">n(if)</span></div>
<div class="c" style="left:398px;top:423px;width:77px;height:17px;text-align:right"><span class="t">4,616</span></div>
<div class="rh" style="top:440px;height:17px;overflow:hidden"><span class="t">36</span></div>
<div class="c" style="left:34px;top:440px;width:203px;height:17px"><span class="t">inactive end coils lower side</span></div>
<div class="c" style="left:398px;top:440px;width:77px;height:17px;text-align:right"><span class="t">0,75</span></div>
<div class="rh" style="top:457px;height:17px;overflow:hidden"><span class="t">37</span></div>
<div class="c" style="left:34px;top:457px;width:203px;height:17px"><span class="t">inactive end coils upper side</span></div>
<div class="c" style="left:398px;top:457px;width:77px;height:17px;text-align:right"><span class="t">0,75</span></div>
<div class="rh" style="top:474px;height:17px;overflow:hidden"><span class="t">38</span></div>
<div class="c" style="left:34px;top:474px;width:203px;height:17px"><span class="t">Total number of coils</span></div>
<div class="c" style="left:240px;top:474px;width:77px;height:17px"><span class="t">nt</span></div>
<div class="c" style="left:398px;top:474px;width:77px;height:17px;text-align:right"><span class="t">6,116</span></div>
<div class="rh" style="top:491px;height:17px;overflow:hidden"><span class="t">39</span></div>
<div class="rh" style="top:508px;height:17px;overflow:hidden"><span class="t">40</span></div>
<div class="c" style="left:34px;top:508px;width:500px;height:17px"><span class="t">SPRING LENGTHS</span></div>
<div class="rh" style="top:525px;height:17px;overflow:hidden"><span class="t">41</span></div>
<div class="c" style="left:34px;top:525px;width:203px;height:17px"><span class="t">free length</span></div>
<div class="c" style="left:240px;top:525px;width:77px;height:17px"><span class="t">L0</span></div>
<div class="c" style="left:320px;top:525px;width:77px;height:17px"><span class="t">mm</span></div>
<div class="c" style="left:400px;top:525px;width:77px;height:17px"><span class="t">29,88  ± 1,1</span></div>
<div class="rh" style="top:542px;height:17px;overflow:hidden"><span class="t">42</span></div>
<div class="c" style="left:34px;top:542px;width:203px;height:17px"><span class="t">spring length at load F1</span></div>
<div class="c" style="left:240px;top:542px;width:77px;height:17px"><span class="t">L1</span></div>
<div class="c" style="left:320px;top:542px;width:77px;height:17px"><span class="t">mm</span></div>
<div class="c" style="left:398px;top:542px;width:77px;height:17px;text-align:right"><span class="t">28</span></div>
<div class="rh" style="top:559px;height:4px;overflow:hidden"><span class="t">43</span></div>
<div class="c" style="left:34px;top:559px;width:203px;height:4px"><span class="t">spring length at load F2</span></div>
<div class="c" style="left:240px;top:559px;width:77px;height:4px"><span class="t">L2</span></div>
<div class="c" style="left:320px;top:559px;width:77px;height:4px"><span class="t">mm</span></div>
<div class="c" style="left:398px;top:559px;width:77px;height:4px;text-align:right"><span class="t">25,5</span></div>
<div style="left:703px;top:117px;width:1px;height:462px;background:#ebe9e4;"></div>
<div class="chk" style="left:688px;top:117px;width:15px;height:446px;background-position:1px 0;"></div>
<div style="left:688px;top:117px;width:15px;height:6px;background:#d4d0c8;box-shadow:inset 1px 1px #fff,inset -1px -1px #808080;"></div>
<div style="left:688px;top:122px;width:15px;height:1px;background:#000;"></div>
<div class="sb15" style="left:688px;top:123px;width:15px;height:15px;"></div>
<svg style="left:692px;top:129px" width="7" height="4" viewBox="0 0 7 4"><path d="M3 0h1v1h1v1h1v1h1v1h-7v-1h1v-1h1v-1h1z" fill="#000"/></svg>
<div class="sb15" style="left:688px;top:207px;width:15px;height:99px;"></div>
<div class="sb15" style="left:688px;top:548px;width:15px;height:15px;"></div>
<svg style="left:692px;top:554px" width="7" height="4" viewBox="0 0 7 4"><path d="M0 0h7v1h-1v1h-1v1h-1v1h-1v-1h-1v-1h-1v-1h-1z" fill="#000"/></svg>
<div style="left:6px;top:563px;width:682px;height:15px;background:#d4d0c8;"></div>
<div style="left:6px;top:578px;width:698px;height:1px;background:#ebe9e4;"></div>
<div style="left:6px;top:563px;width:60px;height:1px;background:#808080;"></div>
<div style="left:107px;top:563px;width:309px;height:1px;background:#808080;"></div>
<div class="r1" style="left:6px;top:564px;width:15px;height:14px;background:#d4d0c8;"></div>
<div class="r1" style="left:21px;top:564px;width:15px;height:14px;background:#d4d0c8;"></div>
<div class="r1" style="left:36px;top:564px;width:15px;height:14px;background:#d4d0c8;"></div>
<div class="r1" style="left:51px;top:564px;width:15px;height:14px;background:#d4d0c8;"></div>
<div style="left:8px;top:567px;width:1px;height:9px;background:#000;"></div>
<svg style="left:10px;top:567px" width="5" height="9" viewBox="0 0 5 9"><path d="M4 0h1v9h-1v-1h-1v-1h-1v-1h-1v-1h-1v-1h1v-1h1v-1h1v-1h1z" fill="#000"/></svg>
<svg style="left:25px;top:567px" width="5" height="9" viewBox="0 0 5 9"><path d="M4 0h1v9h-1v-1h-1v-1h-1v-1h-1v-1h-1v-1h1v-1h1v-1h1v-1h1z" fill="#000"/></svg>
<svg style="left:40px;top:567px" width="5" height="9" viewBox="0 0 5 9"><path d="M0 0h1v1h1v1h1v1h1v1h1v1h-1v1h-1v1h-1v1h-1v1h-1z" fill="#000"/></svg>
<svg style="left:55px;top:567px" width="5" height="9" viewBox="0 0 5 9"><path d="M0 0h1v1h1v1h1v1h1v1h1v1h-1v1h-1v1h-1v1h-1v1h-1z" fill="#000"/></svg>
<div style="left:61px;top:567px;width:1px;height:9px;background:#000;"></div>
<svg style="left:64px;top:563px" width="46" height="16" viewBox="0 0 46 16"><path d="M2 0L9.5 15H35.5L43 0Z" fill="#fff"/><path d="M2.5 0.5L9.5 14.5H35.5L42.5 0.5" fill="none" stroke="#000" stroke-width="1" shape-rendering="auto"/></svg>
<div style="left:66px;top:564px;width:40px;height:15px;line-height:15px;text-align:center;font-weight:bold;font-size:11px;letter-spacing:0.4px">$$2</div>
<div style="left:416px;top:563px;width:5px;height:15px;background:#d4d0c8;box-shadow:inset 1px 0 #fff,inset -1px 0 #000,inset -2px 0 #808080,inset 0 -1px #808080;"></div>
<div class="chk" style="left:421px;top:563px;width:267px;height:15px;background-position:1px 0;"></div>
<div style="left:421px;top:563px;width:1px;height:15px;background:#d4d0c8;"></div>
<div class="sb15" style="left:422px;top:563px;width:15px;height:15px;"></div>
<svg style="left:426px;top:567px" width="4" height="7" viewBox="0 0 4 7"><path d="M3 0h1v7h-1v-1h-1v-1h-1v-1h-1v-1h1v-1h1v-1h1z" fill="#000"/></svg>
<div class="sb15" style="left:437px;top:563px;width:200px;height:15px;"></div>
<div class="sb15" style="left:668px;top:563px;width:15px;height:15px;"></div>
<svg style="left:674px;top:567px" width="4" height="7" viewBox="0 0 4 7"><path d="M0 0h1v1h1v1h1v1h1v1h-1v1h-1v1h-1v1h-1z" fill="#000"/></svg>
<div style="left:683px;top:563px;width:5px;height:15px;background:#d4d0c8;box-shadow:inset 2px 1px #fff,inset 1px 0 #d4d0c8,inset -1px -1px #808080;"></div>
<div style="left:688px;top:563px;width:15px;height:15px;background:#d4d0c8;"></div>
<div style="left:688px;top:563px;width:15px;height:1px;background:#000;"></div>
<div style="left:688px;top:563px;width:1px;height:15px;background:#000;"></div>
<div style="left:10px;top:582.5px;height:15px;line-height:15px;font-size:12px;letter-spacing:0.6px">Bereit</div>
<div style="left:317px;top:581px;width:1px;height:17px;background:#808080;"></div>
<div style="left:318px;top:581px;width:1px;height:17px;background:#ffffff;"></div>
<div class="s1" style="left:325px;top:583px;width:34px;height:15px;"></div>
<div class="s1" style="left:360px;top:583px;width:131px;height:15px;"></div>
<div class="s1" style="left:493px;top:583px;width:31px;height:15px;"></div>
<div class="s1" style="left:526px;top:583px;width:45px;height:15px;"></div>
<div class="s1" style="left:573px;top:583px;width:19px;height:15px;"></div>
<div class="s1" style="left:594px;top:583px;width:34px;height:15px;"></div>
<div class="s1" style="left:630px;top:583px;width:27px;height:15px;"></div>
<div class="s1" style="left:659px;top:583px;width:23px;height:15px;"></div>
<svg style="left:692px;top:586px" width="13" height="13" viewBox="0 0 13 13"><path fill="#ffffff" d="M12 0h1v1h-1zM11 1h1v1h-1zM10 2h1v1h-1zM9 3h1v1h-1zM8 4h1v1h-1zM7 5h1v1h-1zM12 5h1v1h-1zM6 6h1v1h-1zM11 6h1v1h-1zM5 7h1v1h-1zM10 7h1v1h-1zM4 8h1v1h-1zM9 8h1v1h-1zM3 9h1v1h-1zM8 9h1v1h-1zM2 10h1v1h-1zM7 10h1v1h-1zM12 10h1v1h-1zM1 11h1v1h-1zM6 11h1v1h-1zM11 11h1v1h-1zM0 12h1v1h-1zM5 12h1v1h-1zM10 12h1v1h-1z"/><path fill="#808080" d="M12 1h1v1h-1zM11 2h2v1h-2zM10 3h2v1h-2zM9 4h2v1h-2zM8 5h2v1h-2zM7 6h2v1h-2zM12 6h1v1h-1zM6 7h2v1h-2zM11 7h2v1h-2zM5 8h2v1h-2zM10 8h2v1h-2zM4 9h2v1h-2zM9 9h2v1h-2zM3 10h2v1h-2zM8 10h2v1h-2zM2 11h2v1h-2zM7 11h2v1h-2zM12 11h1v1h-1zM1 12h2v1h-2zM6 12h2v1h-2zM11 12h2v1h-2z"/></svg>
</div></body></html>
